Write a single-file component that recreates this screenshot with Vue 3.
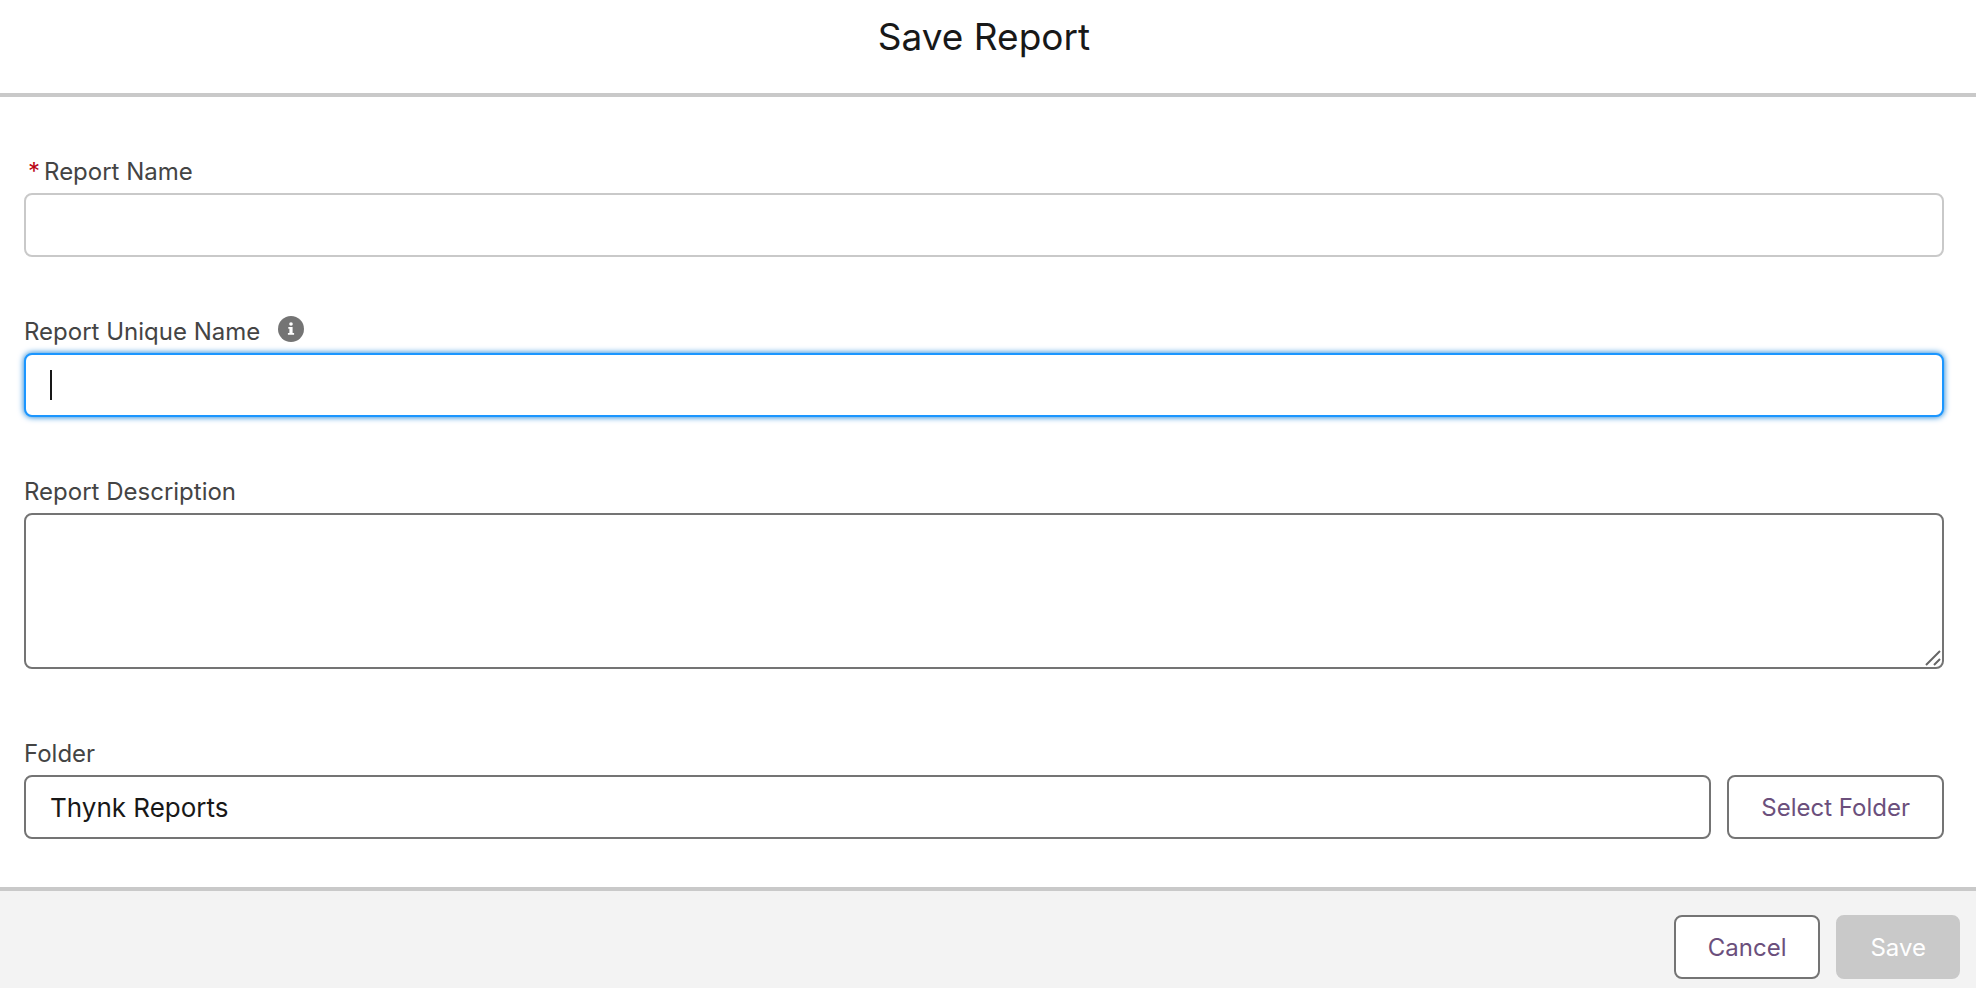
<script setup>
import { ref, onMounted } from 'vue'

const reportName = ref('')
const uniqueName = ref('')
const description = ref('')
const folder = ref('Thynk Reports')
const focused = ref(true)
const uniqueInput = ref(null)

onMounted(() => uniqueInput.value.focus())
</script>

<template>
  <form class="modal" @submit.prevent>
    <header class="modal-header">
      <h1>Save Report</h1>
    </header>

    <main class="modal-body">
      <div class="field">
        <div class="label-row">
          <span class="required" aria-hidden="true">*</span>
          <label for="report-name">Report Name</label>
        </div>
        <input id="report-name" v-model="reportName" class="control light" type="text" required />
      </div>

      <div class="field">
        <div class="label-row">
          <label for="unique-name">Report Unique Name</label>
          <button class="info" type="button" aria-label="Help">
            <svg viewBox="0 0 26 26" width="26" height="26" aria-hidden="true">
              <circle cx="13" cy="13" r="13" fill="#747474" />
              <circle cx="13" cy="8" r="1.8" fill="#fff" />
              <path d="M10.3 11h4.300v6h1.500v1.800h-6.200V17h1.500v-4.200h-1.100z" fill="#fff" />
            </svg>
          </button>
        </div>
        <div class="control-wrap">
          <input
            id="unique-name"
            ref="uniqueInput"
            v-model="uniqueName"
            class="control active"
            type="text"
            @focus="focused = true"
          />
          <span v-if="focused && !uniqueName" class="caret"></span>
        </div>
      </div>

      <div class="field description">
        <div class="label-row">
          <label for="description">Report Description</label>
        </div>
        <div class="control-wrap">
          <textarea id="description" v-model="description" class="control"></textarea>
          <svg class="grip" viewBox="0 0 16 16" width="16" height="16" aria-hidden="true">
            <path d="M1 15L15 1M9 15L15 9" stroke="#666" stroke-width="2" fill="none" />
          </svg>
        </div>
      </div>

      <div class="field">
        <div class="label-row">
          <label for="folder">Folder</label>
        </div>
        <div class="folder-row">
          <input id="folder" v-model="folder" class="control" type="text" readonly />
          <button class="button" type="button">Select Folder</button>
        </div>
      </div>
    </main>

    <footer class="modal-footer">
      <button class="button" type="button">Cancel</button>
      <button class="button" type="submit" disabled>Save</button>
    </footer>
  </form>
</template>

<style>
body {
  margin: 0;
  background: #fff;
}
</style>

<style scoped>
.modal {
  display: flex;
  flex-direction: column;
  min-height: 100vh;
  font-family: Inter, "Liberation Sans", sans-serif;
  font-size: 24px;
  color: #181818;
}

.modal *,
.modal {
  box-sizing: border-box;
}

.modal-header {
  padding: 12px 8px 31px 0;
  border-bottom: 4px solid #c9c9c9;
  text-align: center;
}

h1 {
  margin: 0;
  font-size: 37px;
  font-weight: 400;
  line-height: 50px;
}

.modal-body {
  display: flex;
  flex-direction: column;
  gap: 56px;
  padding: 56px 32px 48px 24px;
}

.description {
  padding-bottom: 10px;
}

.label-row {
  display: flex;
  align-items: flex-start;
  height: 40px;
  line-height: 38px;
  color: #444;
}

.required {
  margin: 0 4px;
  color: #ba0517;
}

.info {
  display: flex;
  margin: 3px 0 0 18px;
  padding: 0;
  border: 0;
  background: none;
}

.control-wrap {
  position: relative;
}

.control {
  display: block;
  width: 100%;
  height: 64px;
  margin: 0;
  padding: 0 24px;
  border: 2px solid #747474;
  border-radius: 8px;
  outline: 0;
  background: #fff;
  color: #181818;
  font: inherit;
  font-size: 26px;
}

.control.light {
  border-color: #c9c9c9;
}

.control.active {
  border-color: #1b96ff;
  box-shadow: 0 0 6px #0176d3;
  caret-color: transparent;
}

textarea.control {
  height: 156px;
  padding: 16px 24px;
  resize: none;
}

.caret {
  position: absolute;
  top: 17px;
  left: 26px;
  width: 2px;
  height: 30px;
  background: #181818;
  pointer-events: none;
}

.grip {
  position: absolute;
  right: 3px;
  bottom: 3px;
  pointer-events: none;
}

.folder-row {
  display: flex;
  gap: 16px;
}

.folder-row .control {
  flex: 1;
  min-width: 0;
}

.button {
  flex: none;
  height: 64px;
  padding: 0 32px;
  border: 2px solid #747474;
  border-radius: 8px;
  background: #fff;
  color: #6b4f7c;
  font: inherit;
  white-space: nowrap;
}

.button:disabled {
  border-color: #c9c9c9;
  background: #c9c9c9;
  color: #fff;
}

.modal-footer {
  display: flex;
  flex: 1;
  justify-content: flex-end;
  align-items: flex-start;
  gap: 16px;
  padding: 24px 16px 9px;
  border-top: 4px solid #c9c9c9;
  background: #f3f3f3;
}
</style>
